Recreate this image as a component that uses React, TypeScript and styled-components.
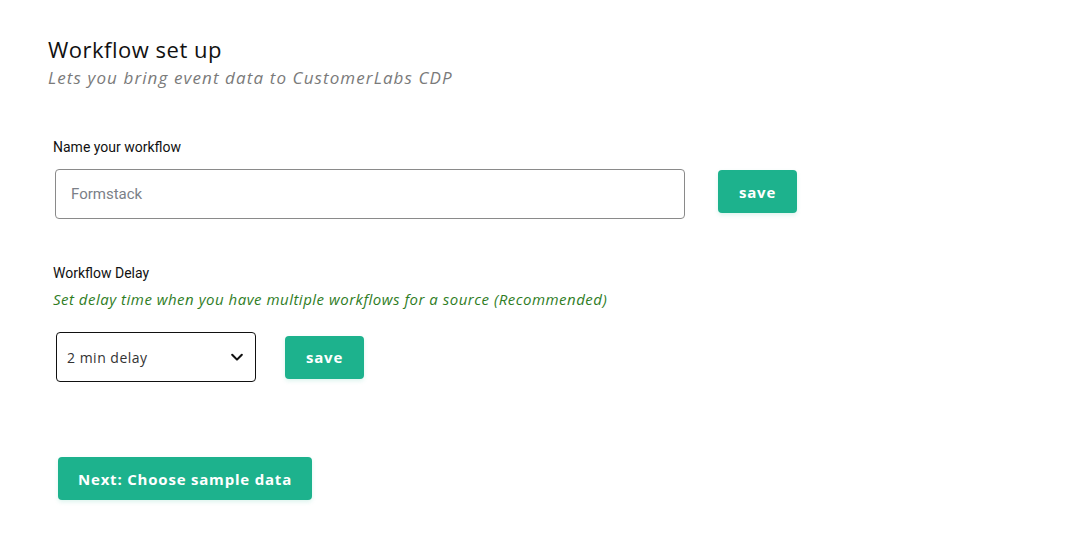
import styled, { createGlobalStyle } from 'styled-components';

const GlobalStyle = createGlobalStyle`
  html, body {
    margin: 0;
    padding: 0;
    background: #ffffff;
  }
  body {
    font-family: 'Roboto', 'Liberation Sans', sans-serif;
  }
`;

const Page = styled.div`
  width: 1085px;
  height: 548px;
  box-sizing: border-box;
  padding: 35px 0 0 48px;
`;

const Title = styled.h1`
  margin: 0;
  font-family: 'Open Sans', 'Lato', sans-serif;
  font-weight: 400;
  font-size: 22px;
  letter-spacing: 0.5px;
  line-height: 28px;
  color: #111;
`;

const Subtitle = styled.p`
  margin: 4px 0 0;
  font-family: 'Open Sans', 'Lato', sans-serif;
  font-style: italic;
  font-size: 17px;
  letter-spacing: 1.1px;
  line-height: 22px;
  color: #7a7a7a;
`;

const Section = styled.section<{ $top: number }>`
  margin-top: ${(p) => p.$top}px;
  padding-left: 5px;
`;

const Label = styled.div`
  font-size: 14px;
  line-height: 18px;
  color: #111;
`;

const Hint = styled.div`
  margin-top: 8px;
  font-family: 'Open Sans', 'Lato', sans-serif;
  font-style: italic;
  font-size: 15px;
  letter-spacing: 0.5px;
  line-height: 18px;
  color: #2f7d1f;
`;

const Row = styled.div<{ $gap: number; $top: number; $align: string }>`
  display: flex;
  align-items: ${(p) => p.$align};
  gap: ${(p) => p.$gap}px;
  margin-top: ${(p) => p.$top}px;
`;

const TextInput = styled.input`
  box-sizing: border-box;
  width: 630px;
  height: 50px;
  margin-left: 2px;
  padding: 0 15px;
  border: 1px solid #8a8a8a;
  border-radius: 4px;
  font-family: 'Roboto', 'Liberation Sans', sans-serif;
  font-size: 15px;
  color: #333;
  outline: none;

  &::placeholder {
    color: #7b8088;
  }
`;

const SelectBox = styled.div`
  box-sizing: border-box;
  width: 200px;
  height: 50px;
  margin-left: 3px;
  padding: 0 11px 0 10px;
  border: 1px solid #111;
  border-radius: 4px;
  display: flex;
  align-items: center;
  justify-content: space-between;
  font-family: 'Open Sans', 'Lato', sans-serif;
  font-size: 14px;
  letter-spacing: 0.5px;
  color: #333;
`;

const Button = styled.button<{ $width: number; $shift?: number }>`
  box-sizing: border-box;
  width: ${(p) => p.$width}px;
  height: 43px;
  margin-top: ${(p) => p.$shift ?? 0}px;
  border: none;
  border-radius: 4px;
  background: #1db28d;
  color: #fff;
  font-family: 'Open Sans', 'Lato', sans-serif;
  font-weight: 700;
  font-size: 15px;
  letter-spacing: 0.8px;
  cursor: pointer;
  box-shadow: 0 2px 4px rgba(29, 178, 141, 0.15);
`;

const NextButton = styled(Button)`
  margin-left: 5px;
`;

const Chevron = () => (
  <svg width="14" height="14" viewBox="0 0 16 16" fill="none">
    <path d="M2.5 5.5 8 11l5.5-5.5" stroke="#111" strokeWidth="2.4" strokeLinecap="round" strokeLinejoin="round" />
  </svg>
);

const App = () => {
  return (
    <Page>
      <GlobalStyle />
      <Title>Workflow set up</Title>
      <Subtitle>Lets you bring event data to CustomerLabs CDP</Subtitle>

      <Section $top={49}>
        <Label>Name your workflow</Label>
        <Row $gap={33} $top={13} $align="flex-start">
          <TextInput placeholder="Formstack" />
          <Button $width={79} $shift={1}>save</Button>
        </Row>
      </Section>

      <Section $top={45}>
        <Label>Workflow Delay</Label>
        <Hint>Set delay time when you have multiple workflows for a source (Recommended)</Hint>
        <Row $gap={29} $top={24} $align="center">
          <SelectBox>
            <span>2 min delay</span>
            <Chevron />
          </SelectBox>
          <Button $width={79}>save</Button>
        </Row>
      </Section>

      <Section $top={75}>
        <NextButton $width={254}>Next: Choose sample data</NextButton>
      </Section>
    </Page>
  );
};

export default App;
